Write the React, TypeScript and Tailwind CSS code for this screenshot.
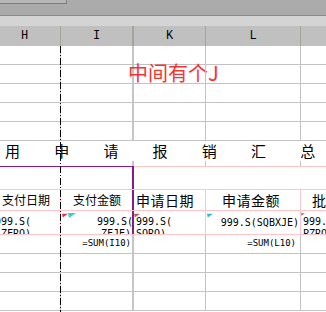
import React from 'react';

const cjk = "font-['Noto_Sans_CJK_SC',sans-serif]";
const mono = "font-['DejaVu_Sans_Mono',monospace]";

// comment / error indicator in a cell corner
function Mark({ color, className }: { color: string; className: string }) {
  return (
    <svg className={`absolute ${className}`} width="8" height="5" viewBox="0 0 8 5">
      <polygon points="0,0 8,0 1,5" fill={color} />
    </svg>
  );
}

function GridRow({ last }: { last?: boolean }) {
  return (
    <div className={`flex h-[19px] ${last ? '' : 'border-b'} border-[#c3c3c3]`}>
      <div className="w-[61px] border-r border-[#c3c3c3]" />
      <div className="w-[73px] border-r-2 border-[#c6c6c6]" />
      <div className="w-[72px] border-r border-[#c3c3c3]" />
      <div className="w-[95px] border-r border-[#c3c3c3]" />
      <div className="flex-1" />
    </div>
  );
}

export default function App() {
  return (
    <div className="relative h-[312px] w-[326px] overflow-hidden bg-white text-black">
      {/* toolbar strip */}
      <div className="h-[16px] border-b border-[#8a8a8a] bg-[#ababab]">
        <div className="h-[4px] w-[67px] border-b border-r border-[#7d7d7d] bg-[#b7b7b7]" />
      </div>
      <div className="h-[10px] bg-[#d4d4d4]" />

      {/* column letters */}
      <div className="flex h-[20px] bg-[#c0c0c0] font-['Liberation_Mono',monospace] text-[12px] leading-[20px]">
        <div className="w-[61px] border-r border-[#a4a497] pl-[21px]">H</div>
        <div className="w-[73px] border-r-2 border-[#a4a497] text-center">I</div>
        <div className="w-[72px] border-r border-[#a4a497] pl-[32px]">K</div>
        <div className="w-[95px] border-r border-[#a4a497] text-center">L</div>
        <div className="flex-1" />
      </div>

      <GridRow />
      <div className="flex h-[19px] border-b border-[#c3c3c3]">
        <div className="w-[61px] border-r border-[#c3c3c3]" />
        <div className={`w-[73px] border-r-2 border-[#c6c6c6] whitespace-nowrap pl-[67px] text-[20px] leading-[15px] text-[#f23535] ${cjk}`}>
          中间有个J
        </div>
        <div className="w-[72px] border-r border-[#c3c3c3]" />
        <div className="w-[95px] border-r border-[#c3c3c3]" />
        <div className="flex-1" />
      </div>
      <GridRow />
      <GridRow />
      <GridRow />

      {/* title */}
      <div className={`flex h-[20px] items-center whitespace-nowrap pl-[5px] text-[15px] tracking-[34.2px] ${cjk}`}>
        用申请报销汇总
      </div>
      <div className="flex h-[5px]">
        <div className="w-[61px]" />
        <div className="w-[73px] border-r-2 border-[#c6c6c6]" />
        <div className="w-[72px] border-r border-[#c3c3c3]" />
        <div className="w-[95px] border-r border-[#c3c3c3]" />
        <div className="flex-1" />
      </div>

      {/* blank row inside the box */}
      <div className="flex h-[24px] border-b border-[#ffc4c8]">
        <div className="w-[134px] border-r-2 border-t border-[#8a1a8a]" />
        <div className="flex-1 border-t border-[#ffc4c8]" />
      </div>

      {/* table header */}
      <div className={`flex h-[21px] items-stretch border-b border-[#ffc4c8] whitespace-nowrap ${cjk}`}>
        <div className="flex w-[61px] items-center border-r border-[#ffc4c8] pl-[2px] text-[12px]">支付日期</div>
        <div className="flex w-[73px] items-center border-r-2 border-[#8a1a8a] pl-[12px] text-[12px]">支付金额</div>
        <div className="flex w-[72px] items-center border-r border-[#ffc4c8] pl-[2px] text-[14px] tracking-[0.5px]">申请日期</div>
        <div className="flex w-[95px] items-center border-r border-[#ffc4c8] pl-[16px] text-[14px] tracking-[0.5px]">申请金额</div>
        <div className="flex flex-1 items-center pl-[11px] text-[14px]">批</div>
      </div>

      {/* field row */}
      <div className={`flex h-[24px] border-b border-[#ffc4c8] whitespace-nowrap text-[10px] leading-[12px] ${mono}`}>
        <div className="w-[61px] overflow-hidden border-r border-[#ffc4c8] pt-[5px] pl-[1px]">
          <div className="-ml-[6px]">999.S(</div>
          <div>ZFRQ)</div>
        </div>
        <div className="relative w-[73px] overflow-hidden border-r-2 border-[#8a1a8a] pt-[5px] text-right">
          <Mark color="#e0335a" className="left-[1px] top-[2px] h-[5px] w-[6px]" />
          <Mark color="#2fd6c4" className="left-[7px] top-[2px]" />
          <div className="-mr-[1px]">999.S(</div>
          <div className="pr-[1px]">ZFJE)</div>
        </div>
        <div className="relative w-[72px] overflow-hidden border-r border-[#ffc4c8] pt-[5px] pl-[2px]">
          <Mark color="#b0606a" className="left-0 top-[2px] h-[5px] w-[6px]" />
          <div>999.S(</div>
          <div>SQRQ)</div>
        </div>
        <div className="relative flex w-[95px] items-center justify-end border-r border-[#ffc4c8] pr-[1px]">
          <Mark color="#2fc0b8" className="left-[1px] top-[2px] h-[5px] w-[6px]" />
          <span>999.S(SQBXJE)</span>
        </div>
        <div className="relative flex-1 overflow-hidden pt-[5px] pl-[2px]">
          <Mark color="#808080" className="left-0 top-[1px] h-[5px] w-[4px]" />
          <div>999.S(</div>
          <div>PZRQ)</div>
        </div>
      </div>

      {/* totals */}
      <div className={`flex h-[19px] border-b border-[#c3c3c3] text-[9px] leading-[17px] ${mono}`}>
        <div className="w-[61px] border-r border-[#c3c3c3]" />
        <div className="w-[73px] border-r-2 border-[#c6c6c6] pr-[1px] text-right">=SUM(I10)</div>
        <div className="w-[72px] border-r border-[#c3c3c3]" />
        <div className="w-[95px] border-r border-[#c3c3c3] pr-[4px] text-right">=SUM(L10)</div>
        <div className="flex-1" />
      </div>
      <GridRow />
      <GridRow />
      <GridRow />

      {/* page break line */}
      <div className="absolute left-[60px] top-[46px] h-[266px] w-px bg-[repeating-linear-gradient(to_bottom,#000_0_7px,transparent_7px_9px,#000_9px_10px,transparent_10px_12px)]" />
    </div>
  );
}
